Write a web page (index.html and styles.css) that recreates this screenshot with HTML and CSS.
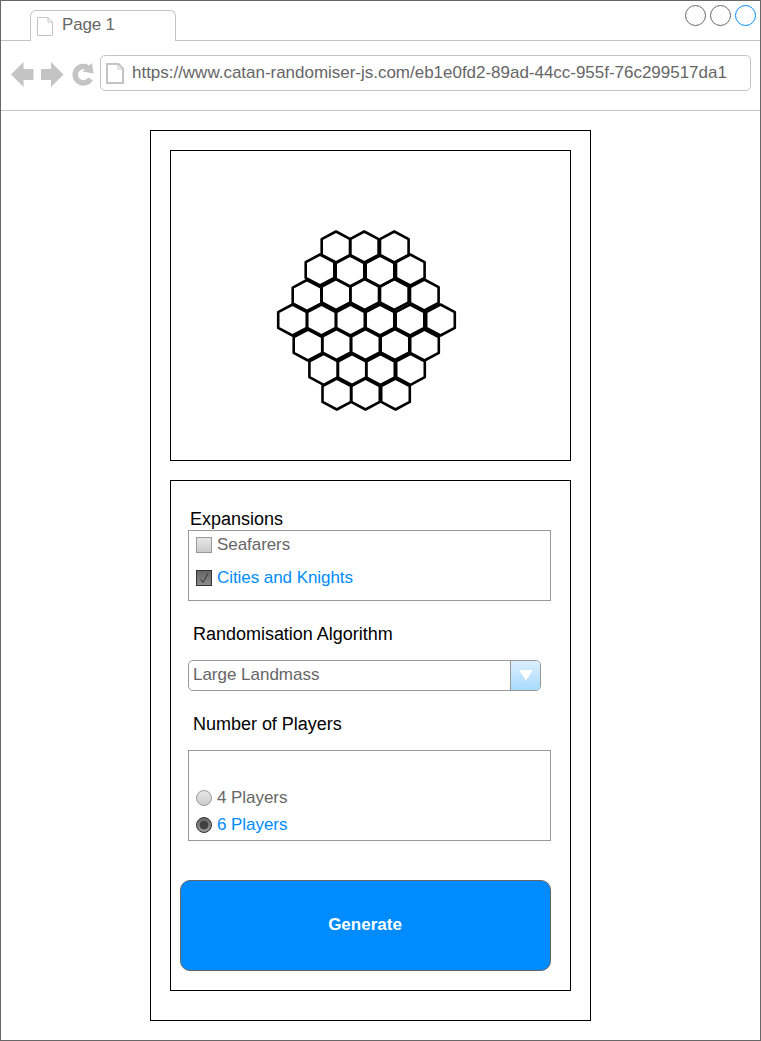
FILE: index.html
```html
<!DOCTYPE html>
<html lang="en">
<head>
<meta charset="utf-8">
<title>Page 1</title>
<link rel="stylesheet" href="styles.css">
</head>
<body>
<div class="window">
  <header class="tabs">
    <div class="tab">
      <svg class="tab-icon" width="16" height="19" viewBox="0 0 16 19"><path d="M.5.5H11L15.500 5V18.500H.5ZM11 .5V5H15.500" fill="none" stroke="#c4c4c4"/></svg>
      <span class="tab-text">Page 1</span>
    </div>
    <div class="tab-line">
      <svg class="controls" width="72" height="22" viewBox="0 0 72 22" fill="none"><circle cx="10.500" cy="10.500" r="10" stroke="#666"/><circle cx="35.500" cy="10.500" r="10" stroke="#666"/><circle cx="60.500" cy="10.500" r="10" stroke="#008cff"/></svg>
    </div>
  </header>
  <nav class="toolbar">
    <svg class="nav-icons" width="84" height="26" viewBox="0 0 84 26" fill="#c4c4c4">
      <path d="M0 12.500 12.500 0V7H22.500V18H12.500V25Z"/>
      <path d="M52.500 12.500 40 0V7H30V18H40V25Z"/>
      <path d="M79.500 16.800A8.200 8.200 0 1 1 77.500 6.300" fill="none" stroke="#c4c4c4" stroke-width="5.500"/>
      <path d="M81 1 82.500 11.500 71.500 9.500Z"/>
    </svg>
    <div class="address">
      <svg class="page-icon" width="18" height="21" viewBox="0 0 18 21"><path d="M1 1H12.500L17 5.500V20H1Z" fill="none" stroke="#c4c4c4" stroke-width="2"/><path d="M12 1V6H17" fill="none" stroke="#c4c4c4"/></svg>
      <span class="url">https://www.catan-randomiser-js.com/eb1e0fd2-89ad-44cc-955f-76c299517da1</span>
    </div>
  </nav>
  <main class="app">
    <section class="board">
      <svg width="399" height="309" viewBox="171 151 399 309">
        <defs><path id="hex" d="M0-15.500 14.300-7.900V7.900L0 15.500-14.300 7.900V-7.900Z" fill="none" stroke="#000" stroke-width="2.600" stroke-linejoin="round"/></defs>
        <g><use href="#hex" x="336" y="247"/><use href="#hex" x="364.300" y="247"/><use href="#hex" x="394.300" y="247"/></g>
        <g><use href="#hex" x="320" y="270"/><use href="#hex" x="350" y="271"/><use href="#hex" x="380" y="271"/><use href="#hex" x="410.300" y="270"/></g>
        <g><use href="#hex" x="307" y="295.500"/><use href="#hex" x="336" y="294.500"/><use href="#hex" x="364.700" y="294.500"/><use href="#hex" x="394.300" y="294.500"/><use href="#hex" x="424.300" y="295"/></g>
        <g><use href="#hex" x="292.500" y="320"/><use href="#hex" x="321.500" y="320"/><use href="#hex" x="350.500" y="320"/><use href="#hex" x="380" y="320"/><use href="#hex" x="410" y="320"/><use href="#hex" x="440.500" y="320"/></g>
        <g><use href="#hex" x="308" y="345"/><use href="#hex" x="336.500" y="344.500"/><use href="#hex" x="365.500" y="344.500"/><use href="#hex" x="395" y="344.500"/><use href="#hex" x="424.500" y="345"/></g>
        <g><use href="#hex" x="323.700" y="369.300"/><use href="#hex" x="352" y="369.500"/><use href="#hex" x="380.500" y="369.500"/><use href="#hex" x="410.500" y="369.300"/></g>
        <g><use href="#hex" x="336.800" y="394"/><use href="#hex" x="365.500" y="394"/><use href="#hex" x="395.500" y="394"/></g>
      </svg>
    </section>
    <section class="settings">
      <h2 class="label label-expansions">Expansions</h2>
      <div class="group expansions">
        <div class="option"><span class="check"></span><span class="option-text">Seafarers</span></div>
        <div class="option selected"><span class="check checked"><svg width="14" height="14" viewBox="0 0 14 14"><path d="M3.500 8 6 11.500 11 2.500" fill="none" stroke="#333"/></svg></span><span class="option-text">Cities and Knights</span></div>
      </div>
      <h2 class="label label-algorithm">Randomisation Algorithm</h2>
      <div class="select"><span class="value">Large Landmass</span><span class="arrow"><svg width="14" height="11" viewBox="0 0 14 11"><path d="M0 0H14L7 10.500Z" fill="#fff"/></svg></span></div>
      <h2 class="label label-players">Number of Players</h2>
      <div class="group players">
        <div class="option"><span class="radio"></span><span class="option-text">4 Players</span></div>
        <div class="option selected"><span class="radio on"></span><span class="option-text">6 Players</span></div>
      </div>
      <button class="generate">Generate</button>
    </section>
  </main>
</div>
</body>
</html>
```
FILE: styles.css
```css
* { box-sizing: border-box; }
body { margin: 0; background: #fff; font: 17px/20px "Liberation Sans", Arial, sans-serif; color: #666; }
span { white-space: nowrap; }
svg { display: block; flex: none; }
.window { width: 761px; height: 1041px; border: 1px solid #666; }
.tabs { display: flex; height: 40px; padding-left: 29px; background: linear-gradient(#c4c4c4, #c4c4c4) 0 39px / 29px 1px no-repeat; }
.tab { display: flex; flex: none; width: 146px; height: 31px; margin-top: 9px; padding-left: 6px; border: 1px solid #c4c4c4; border-bottom: 0; border-radius: 6px 6px 0 0; }
.tab-icon { margin-top: 6px; }
.tab-text { margin: 4px 0 0 9px; letter-spacing: -0.2px; }
.tab-line { display: flex; flex: 1; justify-content: flex-end; padding: 4px 3px 0 0; border-bottom: 1px solid #c4c4c4; }
.toolbar { display: flex; height: 70px; padding: 14px 9px 0 10px; border-bottom: 1px solid #c4c4c4; }
.nav-icons { margin-top: 7px; }
.address { display: flex; width: 651px; height: 36px; margin-left: 5px; padding-left: 5px; border: 1px solid #c4c4c4; border-radius: 5px; }
.page-icon { margin-top: 7px; }
.url { margin: 7px 0 0 8px; letter-spacing: -0.02px; }
.app { width: 441px; height: 891px; margin: 19px 0 0 149px; padding: 19px; border: 1px solid #000; }
.board { width: 401px; height: 311px; border: 1px solid #000; }
.settings { display: flex; flex-direction: column; width: 401px; height: 511px; margin-top: 19px; padding: 28px 0 0 17px; border: 1px solid #000; }
.label { margin: 0 0 0 5px; font-size: 18px; font-weight: 400; line-height: 20px; color: #000; white-space: nowrap; letter-spacing: -0.02px; }
.label-expansions { margin-left: 2px; }
.group { width: 363px; border: 1px solid #999; padding-left: 7px; }
.expansions { display: flex; flex-direction: column; gap: 13px; height: 71px; margin-top: 1px; padding-top: 4px; }
.option { display: flex; height: 20px; gap: 5px; }
.option-text { letter-spacing: -0.06px; }
.selected { color: #008cff; }
.check { width: 16px; height: 16px; margin-top: 2px; border: 1px solid #999; background: linear-gradient(#e6e6e6, #ccc); }
.checked { border-color: #333; background: linear-gradient(#666, #8c8c8c); }
.label-algorithm { margin-top: 23px; }
.select { display: flex; justify-content: space-between; width: 353px; height: 31px; margin-top: 16px; border: 1px solid #999; border-radius: 5px; overflow: hidden; }
.value { margin: 4px 0 0 4px; letter-spacing: -0.02px; }
.arrow { width: 30px; padding: 9px 0 0 8px; border-left: 1px solid #999; background: linear-gradient(#dbeefc, #a8dbff); }
.label-players { margin-top: 23px; }
.players { display: flex; flex-direction: column; gap: 7px; height: 91px; margin-top: 16px; padding-top: 37px; }
.radio { width: 16px; height: 16px; margin-top: 2px; border: 1px solid #999; border-radius: 50%; background: linear-gradient(#e6e6e6, #ccc); }
.on { border-color: #333; background: radial-gradient(circle, #404040 4px, transparent 4.7px), linear-gradient(#666, #999); }
.generate { width: 371px; height: 91px; margin: 39px 0 0 -8px; padding: 0 1px 1px 0; border: 1px solid #666; border-radius: 10px; background: #008cff; color: #fff; font: bold 17px/20px "Liberation Sans", Arial, sans-serif; }
```
